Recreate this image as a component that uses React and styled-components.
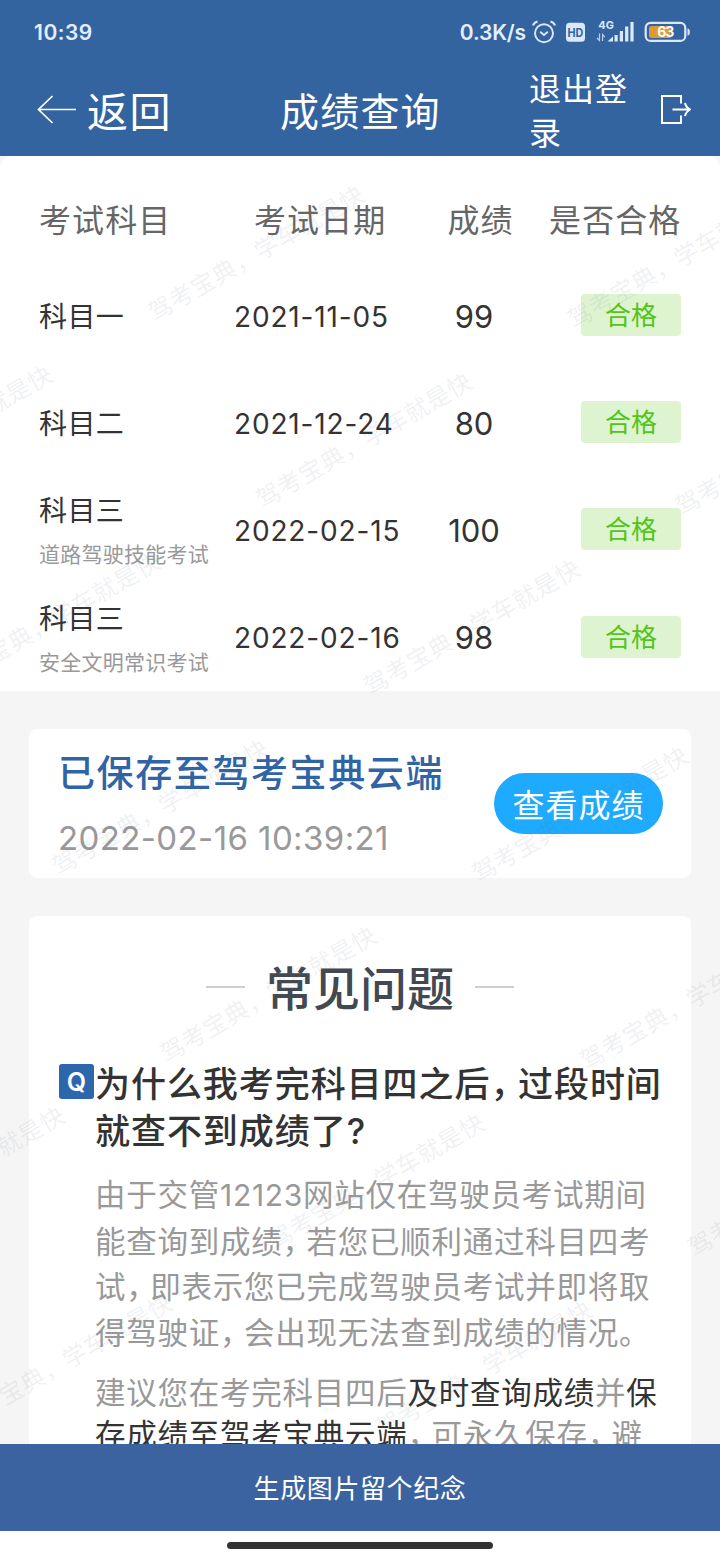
import styled, { createGlobalStyle } from "styled-components";

const exams = [
  { subject: "科目一", date: "2021-11-05", score: 99 },
  { subject: "科目二", date: "2021-12-24", score: 80 },
  { subject: "科目三", detail: "道路驾驶技能考试", date: "2022-02-15", score: 100 },
  { subject: "科目三", detail: "安全文明常识考试", date: "2022-02-16", score: 98 },
];

// the watermark grid is turned by 30deg, only its cells inside the page get a text
const markCells = [];
for (let row = 1; row <= 9; row++) {
  for (let col = 1; col <= 5; col++) {
    const u = (col - 1) * 360;
    const v = (row - 1) * 216;
    const x = -1009 + u * 0.866 + v * 0.5;
    const y = 311 - u * 0.5 + v * 0.866;
    if (x > -220 && x < 710 && y > 20 && y < 1390) {
      markCells.push({ row, col });
    }
  }
}

const StatusIcons = () => (
  <svg width="165" height="32" viewBox="526 16 165 32" fill="none" stroke="#dbe8fa">
    <circle cx="544" cy="33.2" r="9" strokeWidth="1.9" />
    <path d="M540.2 31.8l3.8 3.2 3.8-3.2" strokeWidth="1.9" />
    <path d="M533 25.5q1-3 4.500-4M555 25.500q-1-3-4.500-4" strokeWidth="2" />
    <rect x="566" y="22.700" width="19" height="19" rx="3.500" fill="#dbe8fa" stroke="none" />
    <StatusGlyph x="567.600" y="37" fontSize="12" fill="#3464a0" textLength="15.800" lengthAdjust="spacingAndGlyphs">
      HD
    </StatusGlyph>
    <StatusGlyph x="598.300" y="28.600" fontSize="10.500" fill="#dbe8fa" textLength="15.500" lengthAdjust="spacingAndGlyphs">
      4G
    </StatusGlyph>
    <path d="M599.500 33.500v7l-2.500-2.500M602.600 41v-6.500l2.200 2.500" strokeWidth="1.200" opacity="0.800" />
    <path
      d="M607.500 41.500l5.500-5v5zM614.500 35h3.200v6.500h-3.200zM619.800 31h3.200v10.500h-3.200zM625.100 26.500h3.200v15h-3.200zM630.400 22h3.200v19.500h-3.200z"
      fill="#dbe8fa"
      stroke="none"
    />
    <rect x="645.700" y="22.900" width="39.600" height="18" rx="5" strokeWidth="2.200" />
    <path d="M651.500 26h19v12h-19q-2.500 0-2.500-2.500v-7q0-2.500 2.500-2.500z" fill="#dc9a34" stroke="none" />
    <path d="M687.500 28.500q2.300 0 2.300 3.500t-2.300 3.500z" fill="#dbe8fa" stroke="none" />
    <StatusGlyph x="657.300" y="37.200" fontSize="14" fill="#fff" textLength="17">63</StatusGlyph>
  </svg>
);

const BackArrow = () => (
  <svg width="40" height="30" viewBox="0 0 40 30" fill="none" stroke="#fff" strokeWidth="1.700">
    <path d="M39 15.500H1.500M15.500 2L1.500 15.500l14 13.500" />
  </svg>
);

const LogoutIcon = () => (
  <svg width="32" height="32" viewBox="0 0 32 32" fill="none" stroke="#fff" strokeWidth="2">
    <path d="M22 10.500V3H3v27h19v-7.500" />
    <path d="M13.500 16.500h17M26 10q.8 4.200 5 6.500-4.200 2.500-5 6.500" />
  </svg>
);

const Watermark = () => (
  <WatermarkLayer aria-hidden="true">
    <WatermarkGrid>
      {markCells.map(({ row, col }) => (
        <Mark key={`${row}-${col}`} $row={row} $col={col}>
          驾考宝典，学车就是快
        </Mark>
      ))}
    </WatermarkGrid>
  </WatermarkLayer>
);

const App = () => {
  return (
    <Page>
      <GlobalStyle />
      <Top>
        <StatusBar>
          <Clock>10:39</Clock>
          <Speed>0.3K/s</Speed>
          <StatusIcons />
        </StatusBar>
        <NavBar>
          <Back>
            <BackArrow />
            <span>返回</span>
          </Back>
          <Title>成绩查询</Title>
          <Logout>
            <span>退出登录</span>
            <LogoutIcon />
          </Logout>
        </NavBar>
      </Top>

      <Content>
        <Scores>
          <HeadRow>
            <span>考试科目</span>
            <span>考试日期</span>
            <span>成绩</span>
            <span>是否合格</span>
          </HeadRow>
          {exams.map((exam) => (
            <Row key={exam.date}>
              <Subject>
                <h3>{exam.subject}</h3>
                {exam.detail && <p>{exam.detail}</p>}
              </Subject>
              <ExamDate>{exam.date}</ExamDate>
              <Score>{exam.score}</Score>
              <Passed>合格</Passed>
            </Row>
          ))}
        </Scores>

        <SavedCard>
          <div>
            <SavedTitle>已保存至驾考宝典云端</SavedTitle>
            <SavedTime>2022-02-16 10:39:21</SavedTime>
          </div>
          <ViewButton>查看成绩</ViewButton>
        </SavedCard>

        <FaqCard>
          <FaqTitle>
            <span>常见问题</span>
          </FaqTitle>
          <Question>
            <QBadge>Q</QBadge>
            <h2>
              为什么我考完科目四之后<Comma>，</Comma>过段时间
              <br />
              就查不到成绩了?
            </h2>
          </Question>
          <Answer $line="45.500px">
            由于交管<Digits>12123</Digits>网站仅在驾驶员考试期间
            <br />
            能查询到成绩<Comma>，</Comma>若您已顺利通过科目四考
            <br />
            试<Comma>，</Comma>即表示您已完成驾驶员考试并即将取
            <br />
            得驾驶证<Comma>，</Comma>会出现无法查到成绩的情况。
          </Answer>
          <Answer $line="41.700px">
            建议您在考完科目四后<b>及时查询成绩</b>并<b>保</b>
            <br />
            <b>存成绩至驾考宝典云端</b>
            <Comma>，</Comma>可永久保存<Comma>，</Comma>避
          </Answer>
        </FaqCard>
        <Watermark />
      </Content>

      <SaveBar>生成图片留个纪念</SaveBar>
      <HomeArea>
        <HomeIndicator />
      </HomeArea>
    </Page>
  );
};

const GlobalStyle = createGlobalStyle`
  * {
    box-sizing: border-box;
    margin: 0;
    padding: 0;
  }
  body {
    background: #fff;
    font-family: Inter, "Noto Sans CJK SC", sans-serif;
  }
`;

const Page = styled.div`
  width: 720px;
  height: 1560px;
  display: flex;
  flex-direction: column;
  overflow: hidden;
  white-space: nowrap;
`;

const Top = styled.header`
  height: 156px;
  flex: none;
  background: #3464a0;
  color: #fff;
`;

const StatusBar = styled.div`
  height: 64px;
  display: flex;
  align-items: center;
  padding: 0 29px 0 34px;
  color: #e3eefc;
`;

const Clock = styled.span`
  font-size: 21px;
  font-weight: 600;
  letter-spacing: 0.500px;
  margin-right: auto;
`;

const Speed = styled.span`
  font-size: 21px;
  font-weight: 600;
  letter-spacing: -0.150px;
`;

const StatusGlyph = styled.text`
  font-family: Inter, sans-serif;
  font-weight: 700;
  stroke: none;
`;

const NavBar = styled.nav`
  height: 92px;
  display: grid;
  grid-template-columns: 243px 1fr 191px;
  align-items: center;
  padding-left: 37px;
`;

const Back = styled.div`
  display: flex;
  align-items: center;
  gap: 10px;
  font-size: 41px;
  letter-spacing: 1.500px;
  span {
    padding-bottom: 3px;
  }
  svg {
    margin-bottom: 2px;
  }
`;

const Title = styled.h1`
  font-size: 39px;
  font-weight: 400;
  letter-spacing: 1.200px;
  padding-bottom: 3px;
`;

const Logout = styled.div`
  display: flex;
  align-items: center;
  justify-content: space-between;
  padding-right: 29px;
  span {
    width: 102px;
    white-space: normal;
    font-size: 32px;
    line-height: 44px;
    letter-spacing: 1px;
    padding-top: 4px;
  }
  svg {
    margin-bottom: 3px;
  }
`;

const Content = styled.main`
  position: relative;
  height: 1288px;
  flex: none;
  overflow: hidden;
  background: #f5f5f5;
`;

const Scores = styled.section`
  height: 534.500px;
  padding: 0 39px;
  background: #fff;
  border-radius: 12px 12px 0 0;
  color: #333;
`;

const HeadRow = styled.div`
  height: 106px;
  padding-top: 17px;
  display: grid;
  grid-template-columns: 215px 193.500px 101.500px 1fr;
  align-items: center;
  font-size: 32px;
  letter-spacing: 1.100px;
  color: #666;
`;

const Row = styled.div`
  height: 107.200px;
  display: grid;
  grid-template-columns: 195px 185px 110px 1fr;
  align-items: center;
`;

const Subject = styled.div`
  padding-top: 4px;
  h3 {
    font-size: 28px;
    line-height: 43px;
    font-weight: 400;
    letter-spacing: 0.400px;
    &:not(:last-child) {
      padding-top: 3px;
    }
  }
  p {
    font-size: 21px;
    line-height: 43px;
    letter-spacing: 0.250px;
    color: #999;
  }
`;

const ExamDate = styled.span`
  font-size: 28px;
  letter-spacing: 0.850px;
  padding-top: 2px;
`;

const Score = styled.span`
  font-size: 31px;
  text-align: center;
  padding-top: 1px;
`;

const Passed = styled.span`
  justify-self: end;
  width: 100px;
  height: 42px;
  line-height: 43px;
  margin-bottom: 1px;
  border-radius: 4px;
  text-align: center;
  font-size: 26px;
  color: #52c41a;
  background: #def4d0;
`;

const Card = styled.section`
  margin: 38.500px 29px 0;
  background: #fff;
  border-radius: 8px;
`;

const SavedCard = styled(Card)`
  height: 148.500px;
  padding: 0 28px 0 29px;
  display: flex;
  align-items: center;
  justify-content: space-between;
`;

const SavedTitle = styled.h2`
  font-size: 37px;
  line-height: 64px;
  font-weight: 500;
  letter-spacing: 1.600px;
  padding-top: 6px;
  color: #3164a4;
`;

const SavedTime = styled.p`
  font-size: 33px;
  line-height: 64px;
  letter-spacing: 0.400px;
  color: #999;
`;

const ViewButton = styled.button`
  width: 169px;
  height: 61px;
  padding-bottom: 1px;
  border: 0;
  border-radius: 31px;
  background: #1eaaff;
  color: #fff;
  font-family: inherit;
  font-size: 32px;
  letter-spacing: 1px;
`;

const FaqCard = styled(Card)`
  height: 600px;
  padding: 32px 30px 0;
`;

const FaqTitle = styled.h2`
  height: 78px;
  display: flex;
  justify-content: center;
  align-items: center;
  gap: 21px;
  font-size: 47px;
  font-weight: 500;
  color: #444851;
  span {
    padding-bottom: 4px;
  }
  &::before,
  &::after {
    content: "";
    width: 39px;
    height: 1.500px;
    background: #ccd0d5;
  }
`;

const Question = styled.div`
  display: flex;
  margin-top: 34px;
  h2 {
    font-size: 35px;
    line-height: 47px;
    font-weight: 500;
    letter-spacing: 0.950px;
    padding-top: 1px;
    color: #333;
  }
`;

const QBadge = styled.span`
  width: 35px;
  height: 35px;
  flex: none;
  margin: 4px 1px 0 0;
  border-radius: 3px;
  background: #2c66ad;
  color: #fff;
  font-size: 25px;
  font-weight: 600;
  line-height: 36px;
  text-align: center;
`;

const Answer = styled.p`
  padding-left: 36px;
  margin-top: 17px;
  font-size: 30.500px;
  line-height: ${(props) => props.$line};
  letter-spacing: 0.750px;
  color: #999;
  b {
    font-weight: 400;
    color: #333;
  }
`;

const Comma = styled.span`
  font-feature-settings: "halt";
  margin-right: 0.260em;
`;

const Digits = styled.span`
  font-size: 30px;
  letter-spacing: 0.700px;
`;

const WatermarkLayer = styled.div`
  position: absolute;
  inset: 0;
  overflow: hidden;
  pointer-events: none;
`;

const WatermarkGrid = styled.div`
  position: absolute;
  left: -1009px;
  top: 311px;
  display: grid;
  grid-template: repeat(9, 216px) / repeat(5, 360px);
  transform: rotate(-30deg);
  transform-origin: 0 0;
  font-size: 24px;
  line-height: 32px;
  letter-spacing: 0.500px;
  color: rgba(90, 110, 130, 0.100);
`;

const Mark = styled.span`
  grid-row: ${(props) => props.$row};
  grid-column: ${(props) => props.$col};
`;

const SaveBar = styled.footer`
  height: 86.500px;
  flex: none;
  display: flex;
  align-items: center;
  justify-content: center;
  padding-bottom: 1px;
  background: #3b63a0;
  color: #fff;
  font-size: 26px;
  letter-spacing: 0.600px;
`;

const HomeArea = styled.div`
  flex: 1;
  display: flex;
  align-items: center;
  justify-content: center;
  background: #fff;
`;

const HomeIndicator = styled.div`
  width: 266px;
  height: 7px;
  border-radius: 4px;
  background: #333;
`;

export default App;
